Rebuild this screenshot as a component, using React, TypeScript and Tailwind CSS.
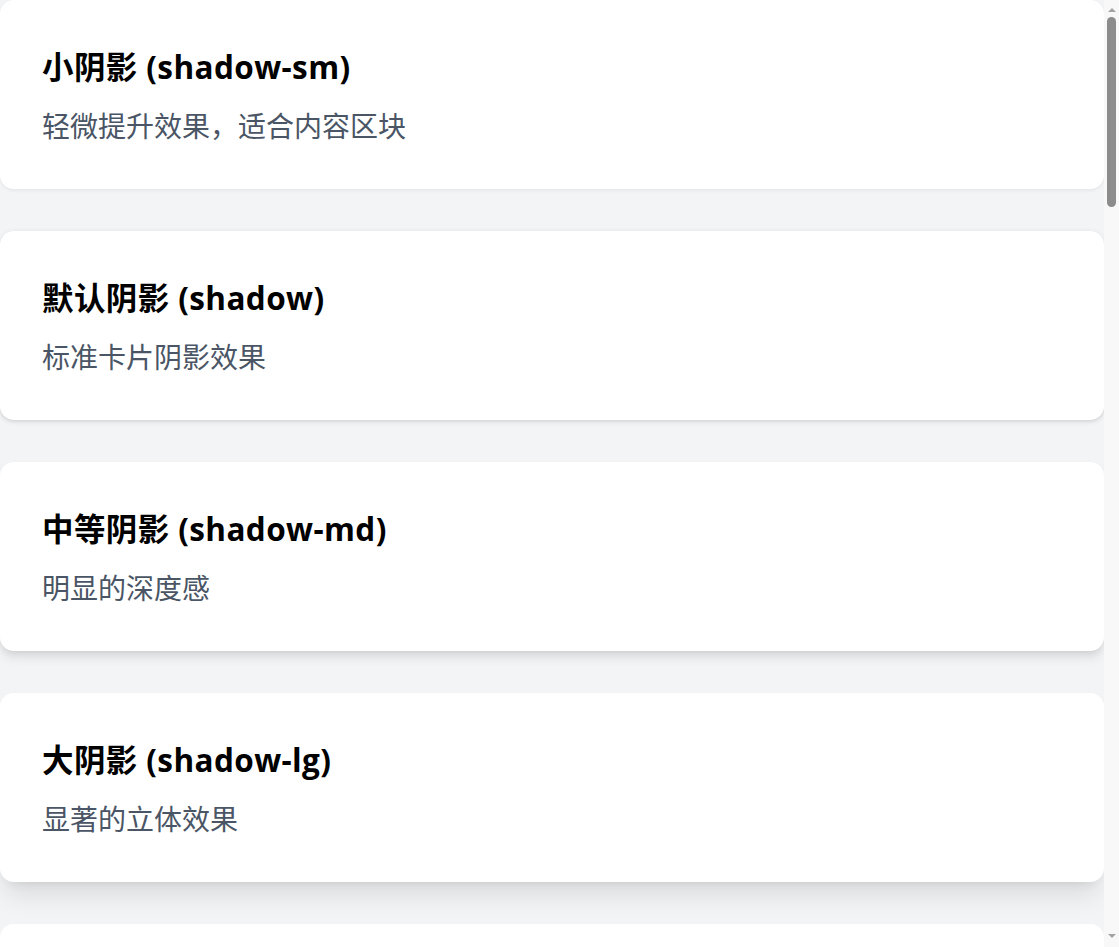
const cards = [
  {
    title: '小阴影 (shadow-sm)',
    desc: '轻微提升效果，适合内容区块',
    shadow: 'shadow-[0_1.75px_3.5px_0_rgb(0_0_0/0.05)]',
  },
  {
    title: '默认阴影 (shadow)',
    desc: '标准卡片阴影效果',
    shadow: 'shadow-[0_1.75px_5.25px_0_rgb(0_0_0/0.1),0_1.75px_3.5px_-1.75px_rgb(0_0_0/0.1)]',
  },
  {
    title: '中等阴影 (shadow-md)',
    desc: '明显的深度感',
    shadow: 'shadow-[0_7px_10.5px_-1.75px_rgb(0_0_0/0.1),0_3.5px_7px_-3.5px_rgb(0_0_0/0.1)]',
  },
  {
    title: '大阴影 (shadow-lg)',
    desc: '显著的立体效果',
    shadow: 'shadow-[0_17.5px_26px_-5.25px_rgb(0_0_0/0.1),0_7px_10.5px_-7px_rgb(0_0_0/0.1)]',
  },
  {
    title: '超大阴影 (shadow-xl)',
    desc: '强烈的悬浮感',
    shadow: 'shadow-[0_35px_44px_-8.75px_rgb(0_0_0/0.1),0_14px_17.5px_-10.5px_rgb(0_0_0/0.1)]',
  },
  {
    title: '特大阴影 (shadow-2xl)',
    desc: '最强的层次效果',
    shadow: 'shadow-[0_44px_87px_-21px_rgb(0_0_0/0.25)]',
  },
];

// browser scrollbar, drawn since the headless shot hides the real one
function Scrollbar() {
  return (
    <div className="fixed top-0 right-0 flex h-screen w-[15px] flex-col items-center bg-[#f8f8f8]">
      <div className="mt-[8px] h-0 w-0 border-x-[4px] border-b-[4px] border-x-transparent border-b-[#a3a3a3]" />
      <div className="mt-[5px] h-[190px] w-[9px] rounded-full bg-[#8c8c8c]" />
      <div className="flex-1" />
      <div className="mb-[9px] h-0 w-0 border-x-[4px] border-t-[4px] border-x-transparent border-t-[#a3a3a3]" />
    </div>
  );
}

export default function App() {
  return (
    <div
      className="min-h-screen bg-gray-100 pr-[15px]"
      style={{ fontFamily: '"Open Sans", "Noto Sans CJK SC", sans-serif' }}
    >
      <div className="flex flex-col gap-[42px] pb-[42px]">
        {cards.map((card) => (
          <div
            key={card.title}
            className={`rounded-[14px] bg-white p-[42px] ${card.shadow}`}
          >
            <h2 className="text-[31.5px] font-bold leading-[49px] tracking-[0.4px] text-black">
              {card.title}
            </h2>
            <p className="mt-[14px] text-[28px] leading-[42px] text-gray-600">
              {card.desc}
            </p>
          </div>
        ))}
      </div>
      <Scrollbar />
    </div>
  );
}
